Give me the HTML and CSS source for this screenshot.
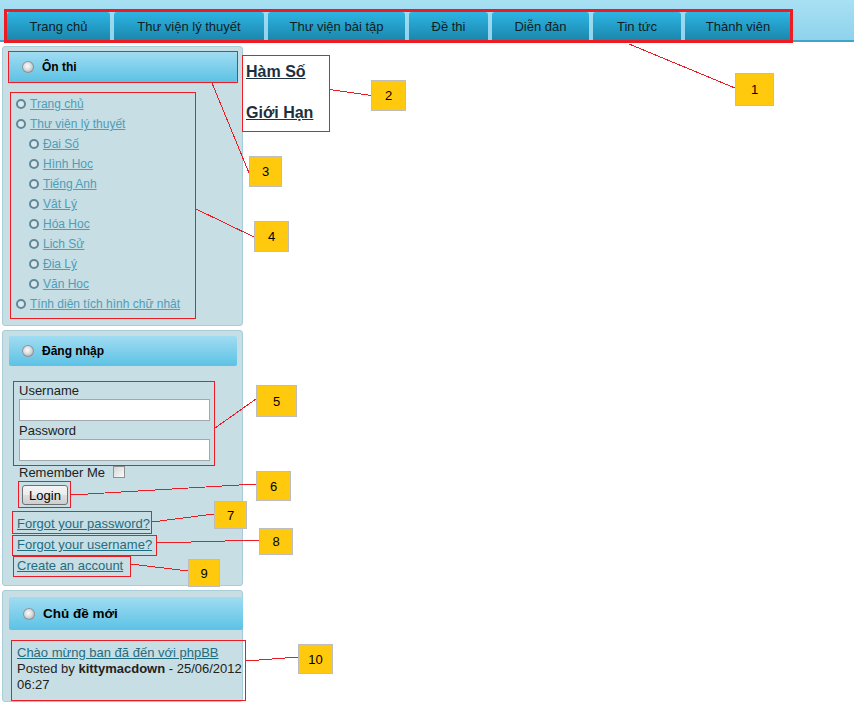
FILE: index.html
```html
<!DOCTYPE html>
<html lang="vi">
<head>
<meta charset="utf-8">
<title>Ôn thi</title>
<link rel="stylesheet" href="styles.css">
</head>
<body>
<div class="page">
  <header class="topbar">
    <nav class="tabs">
      <a class="tab" href="#">Trang chủ</a>
      <a class="tab" href="#">Thư viện lý thuyết</a>
      <a class="tab" href="#">Thư viện bài tập</a>
      <a class="tab" href="#">Đề thi</a>
      <a class="tab" href="#">Diễn đàn</a>
      <a class="tab" href="#">Tin tức</a>
      <a class="tab" href="#">Thành viên</a>
    </nav>
  </header>

  <div class="main">
    <aside class="sidebar">
      <section class="panel panel-menu">
        <h3 class="panel-head"><span class="orb"></span>Ôn thi</h3>
        <ul class="menu">
          <li><a href="#">Trang chủ</a></li>
          <li><a href="#">Thư viện lý thuyết</a></li>
          <li class="sub"><a href="#">Đai Số</a></li>
          <li class="sub"><a href="#">Hình Hoc</a></li>
          <li class="sub"><a href="#">Tiếng Anh</a></li>
          <li class="sub"><a href="#">Vât Lý</a></li>
          <li class="sub"><a href="#">Hóa Hoc</a></li>
          <li class="sub"><a href="#">Lich Sử</a></li>
          <li class="sub"><a href="#">Đia Lý</a></li>
          <li class="sub"><a href="#">Văn Hoc</a></li>
          <li><a href="#">Tính diên tích hình chữ nhât</a></li>
        </ul>
      </section>

      <section class="panel panel-login">
        <h3 class="panel-head"><span class="orb"></span>Đăng nhập</h3>
        <form class="login-form">
          <label class="field-label" for="user">Username</label>
          <input class="text-input" id="user" type="text">
          <label class="field-label pw-label" for="pass">Password</label>
          <input class="text-input" id="pass" type="password">
          <div class="remember">Remember Me <input class="check" type="checkbox"></div>
          <button class="login-btn" type="button">Login</button>
        </form>
        <div class="form-links">
          <a href="#">Forgot your password?</a>
          <a href="#">Forgot your username?</a>
          <a href="#">Create an account</a>
        </div>
      </section>

      <section class="panel panel-topics">
        <h3 class="panel-head head-lg"><span class="orb"></span>Chủ đề mới</h3>
        <div class="topic">
          <a class="topic-link" href="#">Chào mừng ban đã đến với phpBB</a>
          <p class="topic-meta">Posted by <b>kittymacdown</b> - 25/06/2012 06:27</p>
        </div>
      </section>
    </aside>

    <div class="content">
      <a class="big-link" href="#">Hàm Số</a>
      <a class="big-link" href="#">Giới Hạn</a>
    </div>
  </div>

  <div class="annotations">
    <svg width="854" height="708" viewBox="0 0 854 708">
      <g fill="none" stroke="#ed1c24" stroke-width="1" shape-rendering="crispEdges">
        <rect x="5.5" y="10.5" width="786" height="31" stroke-width="3"/>
        <rect x="242.5" y="55.5" width="87" height="76"/>
        <rect x="8.5" y="51.5" width="229" height="31"/>
        <rect x="10.5" y="92.5" width="185" height="226"/>
        <rect x="13.5" y="381.5" width="201" height="84"/>
        <rect x="18.5" y="481.5" width="52" height="26"/>
        <rect x="12.5" y="511.5" width="139" height="22"/>
        <rect x="12.5" y="535.5" width="144" height="20"/>
        <rect x="13.5" y="556.5" width="117" height="20"/>
        <rect x="11.5" y="640.5" width="234" height="60"/>
        <line x1="629" y1="44" x2="735" y2="88"/>
        <line x1="329" y1="89.5" x2="371" y2="95.5"/>
        <line x1="212" y1="83" x2="249" y2="173"/>
        <line x1="196" y1="209" x2="254" y2="237"/>
        <line x1="215" y1="428" x2="256" y2="399"/>
        <line x1="71" y1="495" x2="256" y2="484"/>
        <line x1="152" y1="522" x2="214" y2="514"/>
        <line x1="157" y1="543" x2="259" y2="540"/>
        <line x1="131" y1="564" x2="188" y2="571"/>
        <line x1="246" y1="661" x2="298" y2="657"/>
      </g>
    </svg>
    <div class="callout c1">1</div>
    <div class="callout c2">2</div>
    <div class="callout c3">3</div>
    <div class="callout c4">4</div>
    <div class="callout c5">5</div>
    <div class="callout c6">6</div>
    <div class="callout c7">7</div>
    <div class="callout c8">8</div>
    <div class="callout c9">9</div>
    <div class="callout c10">10</div>
  </div>
</div>
</body>
</html>
```

FILE: styles.css
```css
* { box-sizing: border-box; }
html, body { margin: 0; padding: 0; background: #fff; }
body {
  font-family: "Liberation Sans", Arial, sans-serif;
  font-size: 13px;
  color: #222;
}
.page {
  position: relative;
  width: 854px;
  height: 708px;
  overflow: hidden;
}

/* ---------- top navigation ---------- */
.topbar {
  height: 42px;
  padding: 12px 0 0 7px;
  background: linear-gradient(#a9e0f3, #8ed3ed);
  border-bottom: 2px solid #3fa4ca;
}
.tabs { display: flex; gap: 4px; height: 28px; }
.tab {
  display: flex;
  align-items: center;
  justify-content: center;
  height: 28px;
  padding-top: 1px;
  background: linear-gradient(#2db5e3, #1b87ad);
  border-radius: 3px 3px 0 0;
  color: #0f1d24;
  text-decoration: none;
  font-size: 13px;
}
.tab:nth-child(1) { width: 103px; }
.tab:nth-child(2) { width: 150px; }
.tab:nth-child(3) { width: 137px; }
.tab:nth-child(4) { width: 79px; }
.tab:nth-child(5) { width: 97px; }
.tab:nth-child(6) { width: 88px; }
.tab:nth-child(7) { width: 106px; }

/* ---------- layout ---------- */
.main { display: flex; align-items: flex-start; }
.sidebar {
  width: 241px;
  margin: 4px 0 0 2px;
  display: flex;
  flex-direction: column;
  gap: 4px;
  flex: none;
}
.panel {
  background: #c6dee4;
  border: 1px solid #a8cdd8;
  border-radius: 3px;
  padding: 5px 5px 11px 6px;
}
.panel-head {
  margin: 0;
  height: 30px;
  display: flex;
  align-items: center;
  padding-left: 13px;
  background: linear-gradient(#a0dcf1, #5cc2e5);
  border-radius: 2px;
  font-size: 12px;
  font-weight: bold;
  color: #000;
}
.orb {
  width: 12px;
  height: 12px;
  border-radius: 50%;
  margin-right: 8px;
  flex: none;
  background: radial-gradient(circle at 45% 42%, #fbfbfb 0, #dde1e3 35%, #a7b0b4 75%, #8b969b 100%);
  box-shadow: inset 0 0 0 1px #8a959a;
}

/* ---------- menu ---------- */
.menu { list-style: none; margin: 12px 0 0; padding: 0; }
.menu li {
  display: flex;
  align-items: center;
  height: 20px;
  padding-left: 7px;
  font-size: 12px;
}
.menu li.sub { padding-left: 20px; }
.menu li::before {
  content: "";
  width: 6px;
  height: 6px;
  flex: none;
  margin-right: 4px;
  border: 2px solid #5f8898;
  border-radius: 50%;
  background: #dbe9ee;
}
.menu a { color: #4f9db8; }

/* ---------- login ---------- */
.login-form { padding: 17px 0 0 10px; margin: 0; }
.field-label { display: block; line-height: 16px; color: #222; }
.text-input {
  display: block;
  width: 191px;
  height: 22px;
  margin: 0;
  padding: 0 3px;
  border: 1px solid #a3a8ac;
  background: #fff;
}
.pw-label { margin-top: 2px; }
.remember {
  display: flex;
  align-items: center;
  line-height: 16px;
  margin-top: 4px;
}
.check {
  appearance: none;
  -webkit-appearance: none;
  width: 12px;
  height: 12px;
  margin: 0 0 2px 8px;
  border: 1px solid #8e8f8f;
  background: linear-gradient(135deg, #d6d6d6, #fbfbfb);
}
.login-btn {
  display: block;
  margin: 4px 0 0 3px;
  width: 46px;
  height: 20px;
  padding: 0;
  font: 13px "Liberation Sans", Arial, sans-serif;
  color: #000;
  border: 1px solid #707070;
  border-radius: 3px;
  background: linear-gradient(#f4f4f4 0, #ececec 50%, #dedede 50%, #cfcfcf 100%);
}
.form-links { margin-top: 8px; padding-left: 8px; }
.form-links a {
  display: block;
  width: max-content;
  line-height: 21px;
  color: #1f6d81;
}
.panel-login { padding-bottom: 9px; }

/* ---------- latest topics ---------- */
.panel-topics { padding: 6px 0 8px 6px; }
.panel-topics .head-lg {
  height: 33px;
  font-size: 13.5px;
  padding-left: 14px;
  margin-right: -1px;
}
.topic {
  margin: 15px 0 0 8px;
  width: 240px;
  line-height: 16px;
  color: #222;
}
.topic-link { color: #1f6d81; display: block; width: max-content; }
.topic-meta { margin: 0; }

/* ---------- main content ---------- */
.content { padding: 20px 0 0 3px; }
.big-link {
  display: block;
  width: max-content;
  font-size: 16px;
  font-weight: bold;
  line-height: 19px;
  color: #1c3040;
}
.big-link + .big-link { margin-top: 22px; }

/* ---------- annotations overlay ---------- */
.annotations { position: absolute; inset: 0; pointer-events: none; }
.annotations svg { position: absolute; left: 0; top: 0; }
.callout {
  position: absolute;
  display: flex;
  align-items: center;
  justify-content: center;
  background: #ffc90e;
  border: 1px solid #bdbdbd;
  font-size: 13px;
  color: #000;
}
.c1 { left: 735px; top: 73px; width: 39px; height: 33px; }
.c2 { left: 371px; top: 80px; width: 35px; height: 31px; }
.c3 { left: 249px; top: 156px; width: 33px; height: 31px; }
.c4 { left: 254px; top: 221px; width: 35px; height: 31px; }
.c5 { left: 256px; top: 385px; width: 41px; height: 32px; }
.c6 { left: 256px; top: 471px; width: 35px; height: 30px; }
.c7 { left: 214px; top: 501px; width: 33px; height: 28px; }
.c8 { left: 259px; top: 528px; width: 34px; height: 27px; }
.c9 { left: 188px; top: 559px; width: 32px; height: 28px; }
.c10 { left: 298px; top: 644px; width: 35px; height: 30px; }
```
